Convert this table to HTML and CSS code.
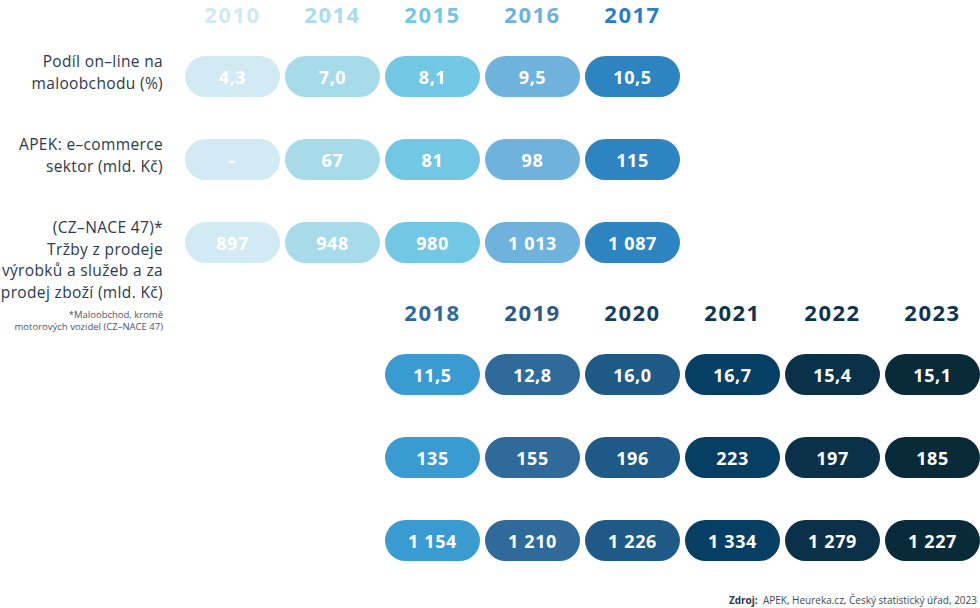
FILE: index.html
```html
<!DOCTYPE html>
<html lang="cs">
<head>
<meta charset="utf-8">
<title>E-commerce</title>
<link rel="stylesheet" href="styles.css">
</head>
<body>
<div class="chart">
  <div class="row head">
    <div class="lbl"></div>
    <div class="yr y2010">2010</div>
    <div class="yr y2014">2014</div>
    <div class="yr y2015">2015</div>
    <div class="yr y2016">2016</div>
    <div class="yr y2017">2017</div>
  </div>
  <div class="row data">
    <div class="lbl">Podíl on–line na<br>maloobchodu (%)</div>
    <div class="pill c2010">4,3</div>
    <div class="pill c2014">7,0</div>
    <div class="pill c2015">8,1</div>
    <div class="pill c2016">9,5</div>
    <div class="pill c2017">10,5</div>
  </div>
  <div class="row data">
    <div class="lbl">APEK: e–commerce<br>sektor (mld. Kč)</div>
    <div class="pill c2010">-</div>
    <div class="pill c2014">67</div>
    <div class="pill c2015">81</div>
    <div class="pill c2016">98</div>
    <div class="pill c2017">115</div>
  </div>
  <div class="row data">
    <div class="lbl">(CZ–NACE 47)*<br>Tržby z prodeje<br>výrobků a služeb a za<br>prodej zboží (mld. Kč)</div>
    <div class="pill c2010">897</div>
    <div class="pill c2014">948</div>
    <div class="pill c2015">980</div>
    <div class="pill c2016">1 013</div>
    <div class="pill c2017">1 087</div>
  </div>

  <div class="row head second">
    <div class="note">*Maloobchod, kromě<br>motorových vozidel (CZ–NACE 47)</div>
    <div class="yr y2018 from4">2018</div>
    <div class="yr y2019">2019</div>
    <div class="yr y2020">2020</div>
    <div class="yr y2021">2021</div>
    <div class="yr y2022">2022</div>
    <div class="yr y2023">2023</div>
  </div>
  <div class="row data">
    <div class="pill c2018 from4">11,5</div>
    <div class="pill c2019">12,8</div>
    <div class="pill c2020">16,0</div>
    <div class="pill c2021">16,7</div>
    <div class="pill c2022">15,4</div>
    <div class="pill c2023">15,1</div>
  </div>
  <div class="row data">
    <div class="pill c2018 from4">135</div>
    <div class="pill c2019">155</div>
    <div class="pill c2020">196</div>
    <div class="pill c2021">223</div>
    <div class="pill c2022">197</div>
    <div class="pill c2023">185</div>
  </div>
  <div class="row data">
    <div class="pill c2018 from4">1 154</div>
    <div class="pill c2019">1 210</div>
    <div class="pill c2020">1 226</div>
    <div class="pill c2021">1 334</div>
    <div class="pill c2022">1 279</div>
    <div class="pill c2023">1 227</div>
  </div>

  <div class="source"><b>Zdroj:</b>&nbsp; APEK, Heureka.cz, Český statistický úřad, 2023</div>
</div>
</body>
</html>
```

FILE: styles.css
```css
html, body {
  margin: 0;
  padding: 0;
  background: #ffffff;
}

body {
  font-family: "Open Sans", "Noto Sans", sans-serif;
  color: #2b3a4f;
  width: 980px;
  height: 608px;
  overflow: hidden;
}

.chart {
  display: flex;
  flex-direction: column;
}

.row {
  display: grid;
  grid-template-columns: 180px repeat(8, 95px);
  column-gap: 5px;
}

.head {
  grid-template-rows: 28px;
  height: 28px;
}

.head.second {
  margin-top: 35px;
}

.data {
  grid-template-rows: 41px;
  height: 41px;
  margin-top: 42px;
}

.head + .data {
  margin-top: 28px;
}

.from4 {
  grid-column-start: 4;
}

.lbl {
  grid-column: 1;
  align-self: start;
  margin-top: -5px;
  padding-right: 17px;
  text-align: right;
  font-size: 15.5px;
  line-height: 21.5px;
  letter-spacing: 0.35px;
  color: #2b3a4f;
  white-space: nowrap;
}

.note {
  grid-column: 1;
  align-self: start;
  margin-top: 11px;
  padding-right: 17px;
  text-align: right;
  font-size: 9.5px;
  line-height: 12px;
  color: #4a5566;
  white-space: nowrap;
}

.yr {
  text-align: center;
  font-weight: 700;
  font-size: 22px;
  line-height: 28px;
  letter-spacing: 1.5px;
}

.pill {
  display: flex;
  align-items: center;
  justify-content: center;
  border-radius: 21px;
  color: #ffffff;
  font-weight: 700;
  font-size: 18px;
  letter-spacing: 0.6px;
}

.y2010 { color: #d0e9f3; }
.y2014 { color: #a9dcec; }
.y2015 { color: #74c7e4; }
.y2016 { color: #6fb1dc; }
.y2017 { color: #2c7fbe; }
.y2018 { color: #306a9a; }
.y2019 { color: #2b5a85; }
.y2020 { color: #173f62; }
.y2021 { color: #0d3550; }
.y2022 { color: #0d3550; }
.y2023 { color: #0d3550; }

.c2010 { background: #d2eaf3; }
.c2014 { background: #a8dbea; }
.c2015 { background: #72c8e4; }
.c2016 { background: #6fb3dd; }
.c2017 { background: #2d84c0; }
.c2018 { background: #3a9bd0; }
.c2019 { background: #2f6a9b; }
.c2020 { background: #1f5a86; }
.c2021 { background: #063f63; }
.c2022 { background: #0a3148; }
.c2023 { background: #082a39; }

.source {
  margin-top: 32px;
  text-align: right;
  padding-right: 3px;
  font-size: 10px;
  line-height: 14px;
  color: #3c4a5c;
}

.source b {
  font-weight: 700;
  color: #2b3a4f;
}
```
